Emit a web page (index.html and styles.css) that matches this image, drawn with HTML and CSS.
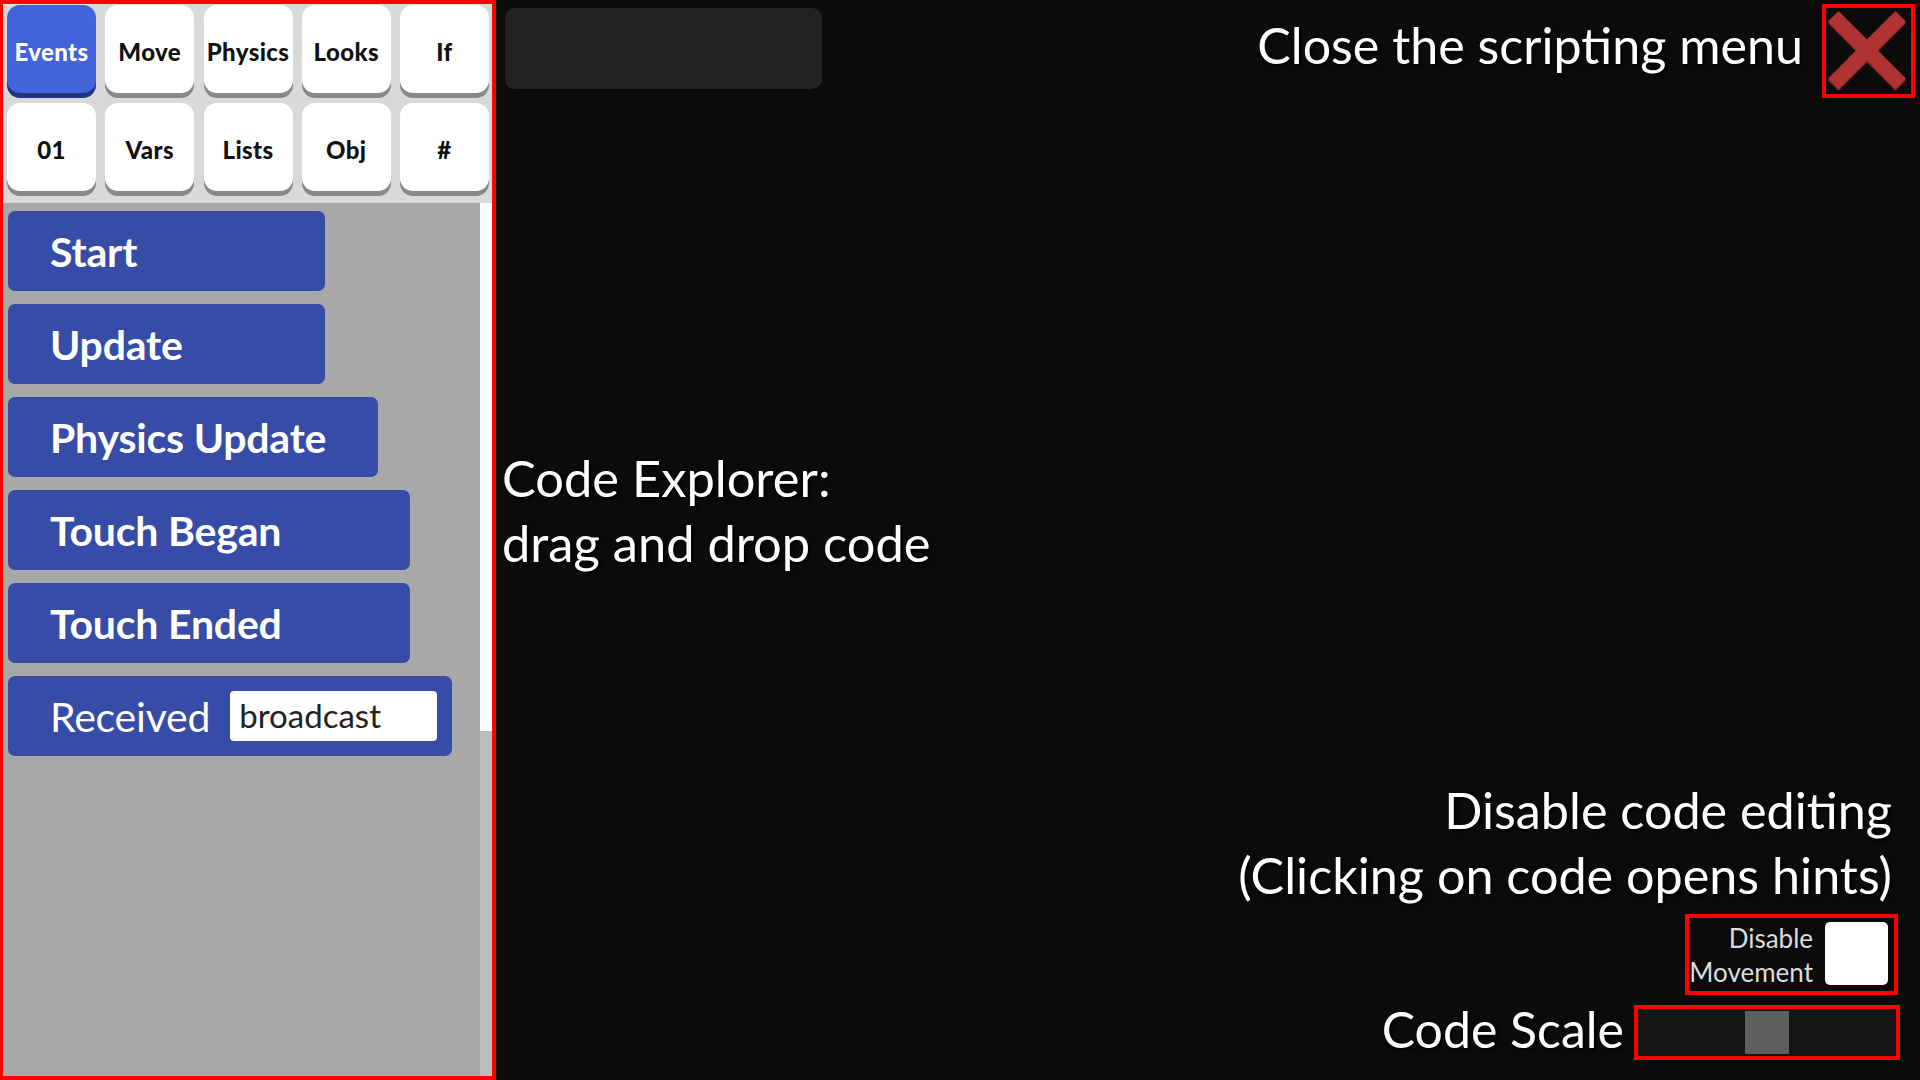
FILE: index.html
```html
<!DOCTYPE html>
<html lang="en">
<head>
<meta charset="utf-8">
<title>Scripting menu</title>
<link rel="stylesheet" href="styles.css">
</head>
<body>
<div class="screen">
  <aside class="sidebar">
    <div class="tabs">
      <button class="tab tab-active">Events</button>
      <button class="tab">Move</button>
      <button class="tab">Physics</button>
      <button class="tab">Looks</button>
      <button class="tab">If</button>
      <button class="tab">01</button>
      <button class="tab">Vars</button>
      <button class="tab">Lists</button>
      <button class="tab">Obj</button>
      <button class="tab">#</button>
    </div>
    <div class="list">
      <div class="blocks">
        <div class="block w-sm">Start</div>
        <div class="block w-sm">Update</div>
        <div class="block w-md">Physics Update</div>
        <div class="block w-lg">Touch Began</div>
        <div class="block w-lg">Touch Ended</div>
        <div class="block block-received w-xl"><span class="recv-label">Received</span><span class="recv-input">broadcast</span></div>
      </div>
      <div class="scrollbar"><div class="scroll-thumb"></div></div>
    </div>
  </aside>
  <main class="main">
    <div class="topbar">
      <div class="searchbox"></div>
      <div class="close-label">Close the scripting menu</div>
      <div class="close-btn">
        <svg width="78" height="80" viewBox="0 0 78 80">
          <g stroke="#7e2222" stroke-width="15" stroke-linecap="butt">
            <line x1="5.3" y1="7.3" x2="72.7" y2="74.7"/>
            <line x1="72.7" y1="7.3" x2="5.3" y2="74.7"/>
          </g>
          <g stroke="#b03333" stroke-width="15" stroke-linecap="butt">
            <line x1="5.3" y1="5.3" x2="72.7" y2="72.7"/>
            <line x1="72.7" y1="5.3" x2="5.3" y2="72.7"/>
          </g>
        </svg>
      </div>
    </div>
    <div class="explorer-label">Code Explorer:<br>drag and drop code</div>
    <div class="bottom">
      <div class="disable-label">Disable code editing<br>(Clicking on code opens hints)</div>
      <div class="movement-box">
        <div class="movement-text">Disable<br>Movement</div>
        <div class="checkbox"></div>
      </div>
      <div class="scale-row">
        <div class="scale-label">Code Scale</div>
        <div class="slider"><div class="slider-thumb"></div></div>
      </div>
    </div>
  </main>
</div>
</body>
</html>
```
FILE: styles.css
```css
* { box-sizing: border-box; }
html, body {
  margin: 0;
  padding: 0;
  width: 1920px;
  height: 1080px;
  overflow: hidden;
  background: #0b0b0b;
  font-family: "Lato", "Open Sans", sans-serif;
}
.screen {
  display: flex;
  width: 1920px;
  height: 1080px;
}

/* ---------- sidebar ---------- */
.sidebar {
  width: 496px;
  height: 1080px;
  border: 4px solid #ff0000;
  border-left-width: 3px;
  display: flex;
  flex-direction: column;
  flex-shrink: 0;
}
.tabs {
  height: 199px;
  background: #d9d9d9;
  display: grid;
  grid-template-columns: repeat(5, 89px);
  grid-auto-rows: 88px;
  column-gap: 9.25px;
  row-gap: 10px;
  padding: 1px 0 0 4px;
}
.tab {
  border: none;
  margin: 0;
  padding: 4px 0 0 0;
  background: #ffffff;
  border-radius: 13px;
  box-shadow: 0 5px 0 #898989;
  font-family: "Lato", sans-serif;
  font-weight: 900;
  font-size: 24px;
  color: #111111;
  letter-spacing: 0.4px;
}
.tab-active {
  background: #4462d9;
  color: #ffffff;
  box-shadow: 0 5px 0 #22337f;
}
.list {
  flex: 1;
  background: #a8a8a8;
  display: flex;
}
.blocks {
  flex: 1;
  display: flex;
  flex-direction: column;
  align-items: flex-start;
  gap: 13px;
  padding: 8px 0 0 5px;
}
.block {
  height: 80px;
  background: #364ca6;
  border-radius: 7px;
  display: flex;
  align-items: center;
  padding-left: 42px;
  color: #ffffff;
  font-weight: 700;
  font-size: 41px;
  letter-spacing: -0.2px;
}
.w-sm { width: 317px; }
.w-md { width: 370px; }
.w-lg { width: 402px; }
.w-xl { width: 444px; }
.block-received {
  padding-right: 15px;
}
.recv-label {
  font-weight: 400;
}
.recv-input {
  margin-left: 20px;
  width: 209px;
  height: 50px;
  background: #ffffff;
  border-radius: 4px;
  color: #222222;
  font-weight: 400;
  font-size: 33px;
  letter-spacing: 0;
  padding-left: 9px;
  display: flex;
  align-items: center;
  padding-bottom: 3px;
}
.scrollbar {
  width: 12px;
  background: #bdbdbd;
}
.scroll-thumb {
  height: 528px;
  background: #ffffff;
}

/* ---------- main ---------- */
.main {
  flex: 1;
  display: flex;
  flex-direction: column;
  padding-bottom: 20px;
  color: #ffffff;
  text-shadow: 2px 2px 3px rgba(0, 0, 0, 0.9);
}
.topbar {
  display: flex;
  align-items: flex-start;
  height: 98px;
}
.searchbox {
  margin: 8px 0 0 9px;
  width: 317px;
  height: 81px;
  background: #232323;
  border-radius: 10px;
}
.close-label {
  margin-left: auto;
  margin-right: 19px;
  margin-top: 16px;
  font-size: 50.2px;
  line-height: 58px;
}
.close-btn {
  margin: 4px 5px 0 0;
  width: 93px;
  height: 94px;
  border: 4px solid #ff0000;
  display: flex;
  align-items: center;
  justify-content: center;
  padding-right: 3px;
}
.close-btn svg { display: block; }
.explorer-label {
  margin-top: 347px;
  margin-left: 6px;
  font-size: 50.6px;
  line-height: 65px;
}
.bottom {
  margin-top: auto;
  display: flex;
  flex-direction: column;
  align-items: flex-end;
}
.disable-label {
  margin-right: 28px;
  text-align: right;
  font-size: 50.3px;
  line-height: 65px;
}
.movement-box {
  margin-top: 7px;
  margin-right: 22px;
  width: 213px;
  height: 81px;
  border: 4px solid #ff0000;
  display: flex;
  align-items: flex-start;
  justify-content: flex-end;
  padding: 4px 6px 0 0;
}
.movement-text {
  text-align: right;
  color: #dcdcdc;
  text-shadow: none;
  font-size: 26px;
  line-height: 34px;
  margin-right: 12px;
  margin-top: -1px;
}
.checkbox {
  width: 63px;
  height: 63px;
  background: #ffffff;
  border-radius: 5px;
}
.scale-row {
  margin-top: 10px;
  margin-right: 20px;
  display: flex;
  align-items: flex-start;
}
.scale-label {
  font-size: 50px;
  line-height: 55px;
  margin-top: -3px;
  margin-right: 10px;
}
.slider {
  width: 266px;
  height: 55px;
  border: 4px solid #ff0000;
  background: #151515;
  padding: 2px 0 0 107px;
}
.slider-thumb {
  width: 44px;
  height: 43px;
  background: #5f5f5f;
}
```
